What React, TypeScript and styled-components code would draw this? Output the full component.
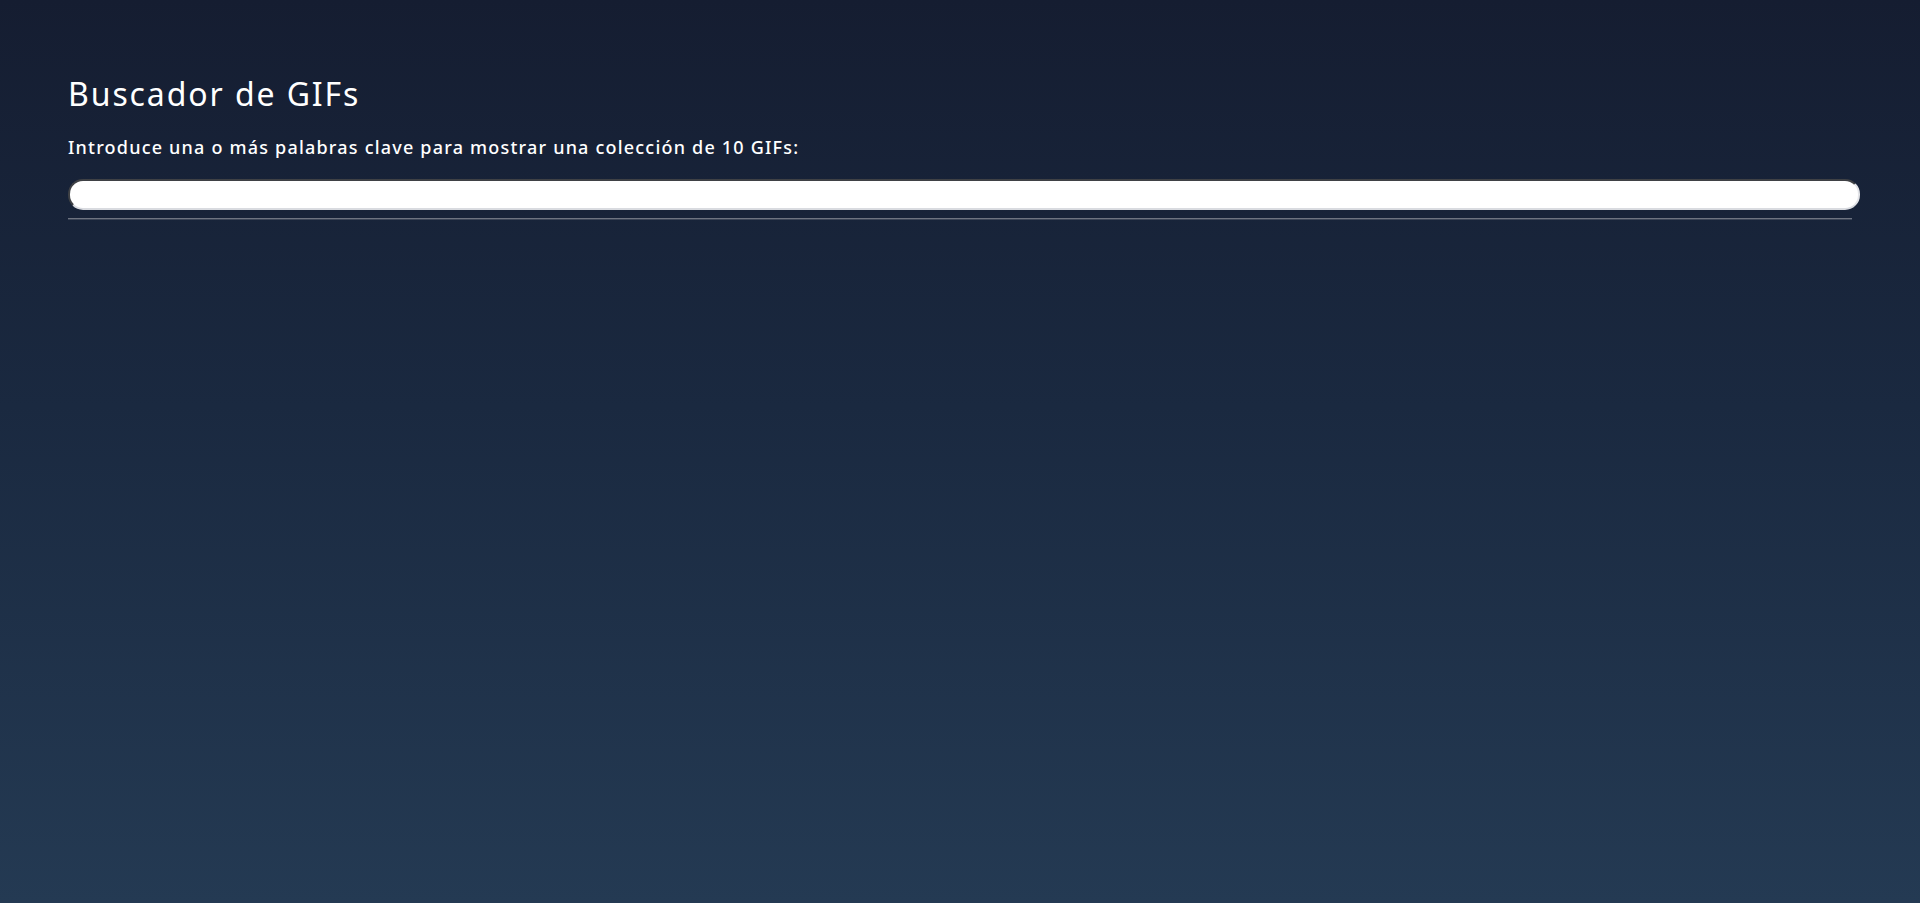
import React from "react";
import styled, { createGlobalStyle } from "styled-components";

const Global = createGlobalStyle`
  html, body { margin: 0; padding: 0; }
  body {
    min-height: 903px;
    background: linear-gradient(180deg, #151d31 0%, #1a2940 45%, #243a53 100%);
    font-family: "Noto Sans", "Open Sans", sans-serif;
    color: #ffffff;
  }
`;

const Page = styled.main`
  box-sizing: border-box;
  min-height: 903px;
  padding: 74px 68px 0 68px;
  display: flex;
  flex-direction: column;
`;

const Title = styled.h1`
  margin: 0;
  font-size: 32px;
  line-height: 40px;
  font-weight: 400;
  letter-spacing: 1.9px;
`;

const Lead = styled.p`
  margin: 21px 0 20px 0;
  font-size: 18px;
  line-height: 24px;
  font-weight: 500;
  letter-spacing: 1.2px;
`;

const SearchInput = styled.input`
  box-sizing: border-box;
  width: calc(100% + 8px);
  height: 31px;
  border-radius: 15px;
  border: 2px inset #8d9099;
  border-right-color: #e3e4e8;
  border-bottom-color: #d9dbe0;
  background: #ffffff;
  padding: 0 14px;
  font-size: 16px;
  outline: none;
`;

const Divider = styled.hr`
  margin: 8px 0 0 0;
  border: none;
  border-top: 1px solid #6e7481;
  border-bottom: 1px solid #3b4557;
  height: 0;
`;

export default function App() {
  return (
    <>
      <Global />
      <Page>
        <Title>Buscador de GIFs</Title>
        <Lead>Introduce una o más palabras clave para mostrar una colección de 10 GIFs:</Lead>
        <SearchInput type="text" aria-label="Buscar GIFs" />
        <Divider />
      </Page>
    </>
  );
}
